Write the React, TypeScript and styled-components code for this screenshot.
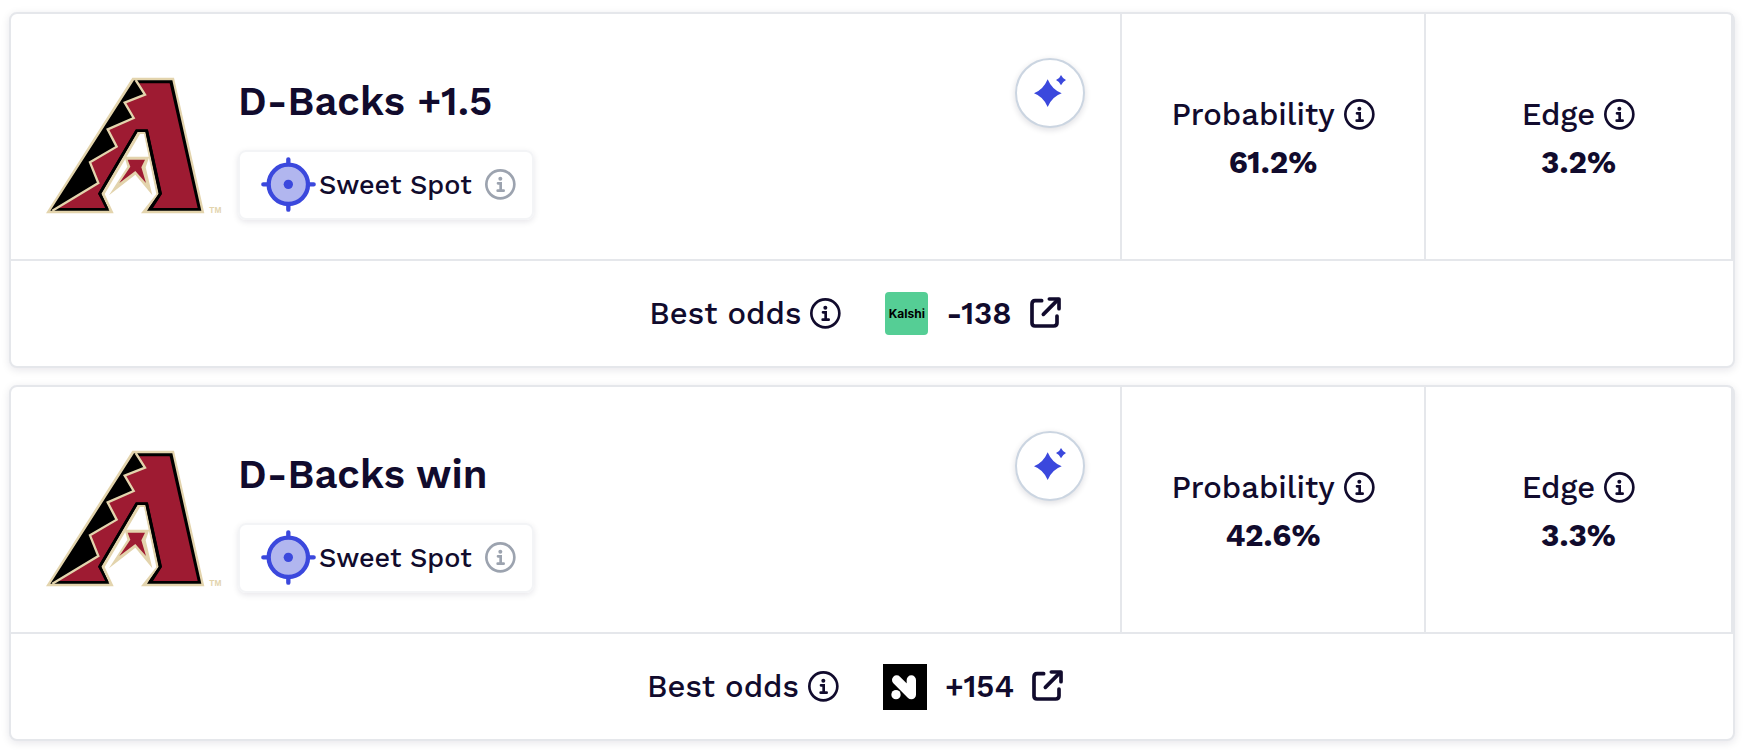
import styled, { createGlobalStyle } from "styled-components";

interface Pick {
  title: string;
  probability: string;
  edge: string;
  book: "kalshi" | "novig";
  odds: string;
}

const picks: Pick[] = [
  {
    title: "D-Backs +1.5",
    probability: "61.2%",
    edge: "3.2%",
    book: "kalshi",
    odds: "-138",
  },
  {
    title: "D-Backs win",
    probability: "42.6%",
    edge: "3.3%",
    book: "novig",
    odds: "+154",
  },
];

function TeamLogo() {
  return (
    <svg width="177" height="138" viewBox="47 51 531 414" aria-hidden="true">
      <path
        fill="#e3d4ad"
        d="M306 53H431L522 460H332L378 402L341 222H329L223 402L250 460H47Z"
      />
      <path d="M311 61H426L513 452H350L385 402L345 215H322L213 401L237 452H60Z" />
      <path
        fill="#9e1b32"
        d="M320 70H418L502 444H368L395 401L353 209H316L203 401L229 444H80L204 369L179 307L259 260L232 208L310 174L283 128L344 104Z"
      />
      <path
        fill="none"
        stroke="#000"
        strokeWidth="8"
        d="M231 448L208 401L319 212H349L390 401L358 448"
      />
      <path
        fill="none"
        stroke="#e3d4ad"
        strokeWidth="7"
        d="M316 60L344 104L283 128L310 174L232 208L259 260L179 307L204 369L66 452"
      />
      <path
        fill="#e3d4ad"
        d="M283 290H357L346 322L366 406L315 344L236 406L291 320Z"
      />
      <path
        fill="#9e1b32"
        d="M292 299H344L333 322L347 369L315 333L267 369L300 320Z"
      />
      <text
        x="537"
        y="459"
        fontSize="25"
        fontFamily="Liberation Sans, sans-serif"
        fontWeight="700"
        fill="#e3d4ad"
      >
        TM
      </text>
    </svg>
  );
}

function TargetIcon() {
  return (
    <svg width="55" height="55" viewBox="0 0 165 165" aria-hidden="true">
      <g stroke="#3b48dd" strokeWidth="13" strokeLinecap="round">
        <path d="M82 7V24M82 141V158M7 82H24M141 82H158" />
        <circle cx="82" cy="82" r="59" fill="#b1b6ef" />
      </g>
      <circle cx="82" cy="82" r="14" fill="#3b48dd" />
    </svg>
  );
}

function InfoIcon() {
  return (
    <svg width="31" height="31" viewBox="0 0 93 93" aria-hidden="true">
      <g
        fill="none"
        stroke="currentColor"
        strokeWidth="8"
        strokeLinecap="round"
      >
        <circle cx="46" cy="46" r="42" />
        <path d="M39 43H47V65M38 65H56" />
      </g>
      <circle cx="46" cy="29" r="6" fill="currentColor" />
    </svg>
  );
}

function SparkleIcon() {
  return (
    <svg width="32" height="32" viewBox="0 0 96 96" aria-hidden="true">
      <path
        fill="#3b48dd"
        d="M41 13Q54 44 83 55Q54 65 41 96Q28 65 0 55Q28 44 41 13Z"
      />
      <path
        fill="#3b48dd"
        d="M81 0Q86 11 96 15Q86 20 81 31Q77 20 66 15Q77 11 81 0Z"
      />
    </svg>
  );
}

function ExternalIcon() {
  return (
    <svg
      width="31"
      height="33"
      viewBox="0 0 93 99"
      fill="none"
      stroke="currentColor"
      strokeWidth="11"
      strokeLinecap="round"
      aria-hidden="true"
    >
      <path d="M35 11H15Q6 11 6 21V78Q6 87 15 87H71Q81 87 81 78V57" />
      <path d="M40 52L84 8" />
      <path d="M58 6H87V35" strokeLinejoin="round" />
    </svg>
  );
}

function NovigLogo() {
  return (
    <svg width="44" height="46" viewBox="0 0 132 138" aria-hidden="true">
      <path d="M0 0H132V138H0Z" />
      <path
        fill="none"
        stroke="#fff"
        strokeWidth="28"
        strokeLinecap="round"
        strokeLinejoin="round"
        d="M41 48L85 92V48"
      />
      <circle cx="39" cy="92" r="14" fill="#fff" />
    </svg>
  );
}

function PickCard({ pick }: { pick: Pick }) {
  return (
    <Card>
      <Details>
        <Summary>
          <Team>
            <TeamLogo />
            <Heading>
              <Title>{pick.title}</Title>
              <Tag>
                <TargetIcon />
                <TagLabel>Sweet Spot</TagLabel>
                <InfoButton $muted aria-label="About Sweet Spot">
                  <InfoIcon />
                </InfoButton>
              </Tag>
            </Heading>
          </Team>
          <SparkleButton aria-label="Insights">
            <SparkleIcon />
          </SparkleButton>
        </Summary>
        <Stat>
          <Label>
            Probability
            <InfoButton aria-label="About probability">
              <InfoIcon />
            </InfoButton>
          </Label>
          <StatValue>{pick.probability}</StatValue>
        </Stat>
        <Stat>
          <Label>
            Edge
            <InfoButton aria-label="About edge">
              <InfoIcon />
            </InfoButton>
          </Label>
          <StatValue>{pick.edge}</StatValue>
        </Stat>
      </Details>
      <OddsRow>
        <Label>
          Best odds
          <InfoButton aria-label="About best odds">
            <InfoIcon />
          </InfoButton>
        </Label>
        <OddsLink href="#">
          {pick.book === "kalshi" ? <Kalshi>Kalshi</Kalshi> : <NovigLogo />}
          <Odds>{pick.odds}</Odds>
          <ExternalIcon />
        </OddsLink>
      </OddsRow>
    </Card>
  );
}

export default function App() {
  return (
    <>
      <GlobalStyle />
      <List>
        {picks.map((pick) => (
          <PickCard key={pick.title} pick={pick} />
        ))}
      </List>
    </>
  );
}

const GlobalStyle = createGlobalStyle`
  * {
    box-sizing: border-box;
  }

  body {
    margin: 0;

    font-family: "Work Sans", Inter, sans-serif;
    color: #110b2d;

    background-color: #fff;
  }

  svg {
    display: block;
    flex-shrink: 0;
  }
`;

const List = styled.main`
  display: flex;
  flex-direction: column;
  gap: 17px;

  padding: 12px 10px 9px 9px;
`;

const Card = styled.section`
  background-color: #fff;

  border: 2px solid #e5e7eb;
  border-radius: 8px;
  box-shadow: 0 2px 8px rgba(17, 11, 45, 0.1);
`;

const Details = styled.div`
  display: grid;
  grid-template-columns: 1fr 304px 307px;

  border-bottom: 2px solid #e5e7eb;
`;

const Summary = styled.div`
  display: flex;
  align-items: flex-start;
  justify-content: space-between;

  padding: 44px 35px 39px;

  border-right: 2px solid #e5e7eb;
`;

const Team = styled.div`
  display: flex;
  align-items: flex-start;
  gap: 15px;

  padding-top: 19px;
`;

const Heading = styled.div`
  display: flex;
  flex-direction: column;
  align-items: flex-start;
  gap: 23px;
`;

const Title = styled.h2`
  margin: 0;

  font-size: 40px;
  font-weight: 600;
  line-height: 50px;
`;

const Tag = styled.div`
  display: flex;
  align-items: center;

  padding: 5px 16px 6px 21px;

  border: 2px solid #f3f4f6;
  border-radius: 8px;
  box-shadow: 0 2px 6px rgba(17, 11, 45, 0.1);
`;

const TagLabel = styled.span`
  margin: 0 13px 0 3px;

  font-size: 27px;
  font-weight: 500;
  line-height: 32px;
`;

const InfoButton = styled.button<{ $muted?: boolean }>`
  padding: 0;

  color: ${({ $muted }) => ($muted ? "#9ca3af" : "inherit")};

  background: none;
  border: 0;
  cursor: pointer;
`;

const SparkleButton = styled.button`
  display: flex;
  align-items: center;
  justify-content: center;

  width: 70px;
  height: 70px;
  padding: 0 0 4px;

  background-color: #fff;

  border: 2px solid #cbd5e1;
  border-radius: 50%;
  box-shadow: 0 2px 6px rgba(17, 11, 45, 0.14);
  cursor: pointer;
`;

const Stat = styled.div`
  display: flex;
  flex-direction: column;
  align-items: center;
  justify-content: center;

  padding-top: 4px;

  border-right: 2px solid #e5e7eb;
`;

const Label = styled.div`
  display: flex;
  align-items: center;
  gap: 9px;

  font-size: 31px;
  font-weight: 500;
  line-height: 48px;
`;

const StatValue = styled.strong`
  font-size: 31px;
  font-weight: 700;
  line-height: 48px;
`;

const OddsRow = styled.div`
  display: flex;
  align-items: center;
  justify-content: center;
  gap: 44px;

  min-height: 105px;
  padding-right: 34px;
`;

const OddsLink = styled.a`
  display: flex;
  align-items: center;
  gap: 18px;

  color: inherit;
  text-decoration: none;
`;

const Odds = styled.span`
  font-size: 31px;
  font-weight: 600;
`;

const Kalshi = styled.span`
  display: flex;
  align-items: center;
  justify-content: center;

  width: 43px;
  height: 43px;

  font-family: Inter, sans-serif;
  font-size: 12px;
  font-weight: 700;
  color: #000;

  background-color: #55ce95;
  border-radius: 4px;
`;
